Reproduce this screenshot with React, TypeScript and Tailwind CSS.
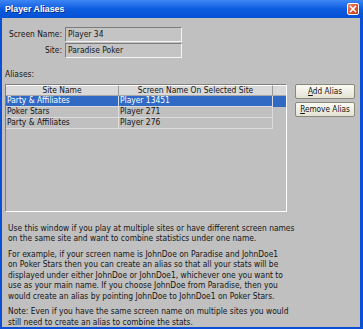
import React from "react";

const rows = [
  { site: "Party & Affiliates", name: "Player 13451", selected: true },
  { site: "Poker Stars", name: "Player 271", selected: false },
  { site: "Party & Affiliates", name: "Player 276", selected: false },
];

export default function App() {
  return (
    <div
      className="w-[363px] h-[329px] flex flex-col overflow-hidden bg-[#0a4fd6] text-[#141414] text-[8.4px] leading-[10.5px]"
      style={{ fontFamily: '"DejaVu Sans Condensed", "Liberation Sans", sans-serif' }}
    >
      {/* Title bar */}
      <div className="h-[18px] shrink-0 flex items-center justify-between pl-[5px] pr-[4px] bg-gradient-to-b from-[#3d86f5] via-[#0b5ce0] to-[#0650d4]">
        <span
          className="text-white font-bold text-[8.8px]"
          style={{ fontFamily: '"Liberation Sans", sans-serif', textShadow: "1px 1px 0 #0a2f8a" }}
        >
          Player Aliases
        </span>
        <div className="w-[12px] h-[12px] rounded-[2px] border border-white bg-gradient-to-br from-[#f08a6a] via-[#e0502c] to-[#c23a18] flex items-center justify-center">
          <svg width="8" height="8" viewBox="0 0 8 8">
            <path d="M1.5 1.5 L6.5 6.5 M6.5 1.5 L1.5 6.5" stroke="white" strokeWidth="1.6" strokeLinecap="square" />
          </svg>
        </div>
      </div>

      {/* Body */}
      <div className="flex-1 ml-[2px] mr-[3px] mb-[2px] bg-[#c0c0c0] flex flex-col">
        {/* Fields */}
        <div className="mt-[9px] flex flex-col gap-[1px]">
          <div className="flex items-center">
            <div className="w-[62px] text-right pr-[2px]">Screen Name:</div>
            <div className="ml-[1px] w-[117px] h-[15px] border-t border-l border-[#7c7c7c] border-b border-r border-b-[#f4f4f4] border-r-[#f4f4f4] bg-[#c4c4c4] flex items-center pl-[2px]">
              Player 34
            </div>
          </div>
          <div className="flex items-center">
            <div className="w-[62px] text-right pr-[2px]">Site:</div>
            <div className="ml-[1px] w-[117px] h-[15px] border-t border-l border-[#7c7c7c] border-b border-r border-b-[#f4f4f4] border-r-[#f4f4f4] bg-[#c4c4c4] flex items-center pl-[2px]">
              Paradise Poker
            </div>
          </div>
        </div>

        <div className="mt-[11px] ml-[3px]">Aliases:</div>

        {/* List + buttons */}
        <div className="mt-[4px] ml-[3px] flex items-start gap-[8px]">
          <div className="w-[282px] h-[128px] border-t border-l border-[#808080] border-b border-r border-b-white border-r-white flex flex-col">
            <div className="flex h-[11px] shrink-0">
              <div className="w-[113px] bg-[#d9d9d9] border-t border-t-white border-r border-r-[#9a9a9a] border-b border-b-[#a8a8a8] flex items-center justify-center">
                Site Name
              </div>
              <div className="w-[154px] bg-[#d9d9d9] border-t border-t-white border-r border-r-[#9a9a9a] border-b border-b-[#a8a8a8] flex items-center justify-center">
                Screen Name On Selected Site
              </div>
              <div className="flex-1 bg-[#d9d9d9] border-t border-t-white border-b border-b-[#a8a8a8]" />
            </div>
            {rows.map((r, i) => (
              <div
                key={i}
                className={
                  r.selected
                    ? "flex h-[11px] shrink-0 bg-[#316ac5] text-white"
                    : "flex h-[11px] shrink-0"
                }
              >
                <div className="w-[113px] border-r border-r-[#dcdcdc] border-b border-b-[#dcdcdc] flex items-center pl-[1px]">
                  {r.site}
                </div>
                <div className="w-[154px] border-r border-r-[#dcdcdc] border-b border-b-[#dcdcdc] flex items-center pl-[1px]">
                  {r.name}
                </div>
              </div>
            ))}
          </div>

          <div className="flex flex-col gap-[3px]">
            <button className="w-[60px] h-[15px] rounded-[2px] border border-[#8a8a7a] bg-gradient-to-b from-[#fbfbf5] to-[#e4e2d4] flex items-center justify-center text-[8.2px]">
              <span>
                <span className="underline">A</span>dd Alias
              </span>
            </button>
            <button className="w-[60px] h-[15px] rounded-[2px] border border-[#8a8a7a] bg-gradient-to-b from-[#fbfbf5] to-[#e4e2d4] flex items-center justify-center text-[8.2px]">
              <span>
                <span className="underline">R</span>emove Alias
              </span>
            </button>
          </div>
        </div>

        {/* Help text */}
        <div className="mt-[11px] pl-[6px] flex flex-col gap-[5px]">
          <p>
            Use this window if you play at multiple sites or have different screen names
            <br />
            on the same site and want to combine statistics under one name.
          </p>
          <p>
            For example, if your screen name is JohnDoe on Paradise and JohnDoe1
            <br />
            on Poker Stars then you can create an alias so that all your stats will be
            <br />
            displayed under either JohnDoe or JohnDoe1, whichever one you want to
            <br />
            use as your main name. If you choose JohnDoe from Paradise, then you
            <br />
            would create an alias by pointing JohnDoe to JohnDoe1 on Poker Stars.
          </p>
          <p>
            Note: Even if you have the same screen name on multiple sites you would
            <br />
            still need to create an alias to combine the stats.
          </p>
        </div>
      </div>
    </div>
  );
}
